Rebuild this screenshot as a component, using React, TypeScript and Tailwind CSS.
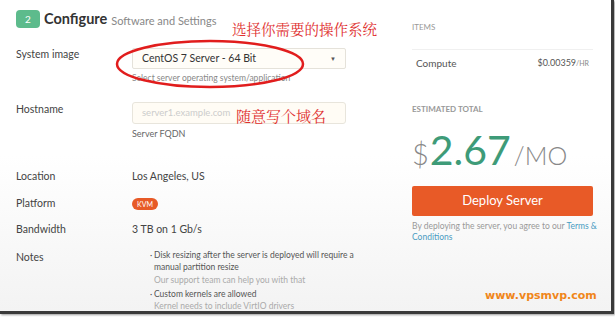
import React from "react";

const font = { fontFamily: '"Lato", "Noto Sans", sans-serif' };
const cjk = { fontFamily: '"Noto Serif CJK SC", "Noto Sans CJK SC", serif' };

export default function App() {
  return (
    <div className="w-[615px] h-[317px] bg-white overflow-hidden" style={font}>
      <div className="relative w-[614px] h-[314px] border-r-[3px] border-b-[3px] border-[#3a3a3a] bg-gradient-to-b from-white via-white to-[#f3f3f3] flex shadow-[1px_1px_2px_rgba(0,0,0,0.4)]">
        {/* Left column */}
        <div className="w-[346px] ml-4 pt-[10px] flex flex-col">
          <div className="flex items-center h-[18px]">
            <div className="w-[24px] h-[18px] rounded-[4px] bg-[#5dbb8c] text-white text-[10px] flex items-center justify-center">2</div>
            <span className="ml-[4px] text-[14.5px] font-bold text-[#333] leading-none">Configure</span>
            <span className="ml-[4px] text-[11px] text-[#888] leading-none mt-[3px]">Software and Settings</span>
          </div>

          <div className="flex mt-[20px]">
            <div className="w-[116px] text-[10.5px] text-[#444] leading-[14px] -mt-[1px]">System image</div>
            <div className="flex flex-col">
              <div className="w-[214px] h-[21px] border border-[#e5e2da] rounded-[2px] bg-[#fffdf8] flex items-center justify-between px-[9px]">
                <span className="text-[10.5px] text-[#333]">CentOS 7 Server - 64 Bit</span>
                <span className="text-[6px] text-[#555]">▼</span>
              </div>
              <div className="text-[8.5px] text-[#888] mt-[3px] leading-[12px]">Select server operating system/application</div>
            </div>
          </div>

          <div className="flex mt-[18px]">
            <div className="w-[116px] text-[10.5px] text-[#444] leading-[14px]">Hostname</div>
            <div className="flex flex-col">
              <div className="w-[214px] h-[22px] border border-[#e8e5dc] rounded-[3px] bg-[#fffcf5] flex items-center px-[9px]">
                <span className="text-[9.5px] text-[#ccc]">server1.example.com</span>
              </div>
              <div className="text-[9px] text-[#666] mt-[4px] leading-[12px]">Server FQDN</div>
            </div>
          </div>

          <div className="h-px bg-[#eee] w-[330px] mt-[22px]" />

          <div className="flex mt-[8px] items-center h-[14px]">
            <div className="w-[116px] text-[10.5px] text-[#444]">Location</div>
            <div className="text-[10.5px] text-[#444]">Los Angeles, US</div>
          </div>
          <div className="flex mt-[13px] items-center h-[14px]">
            <div className="w-[116px] text-[10.5px] text-[#444]">Platform</div>
            <div className="h-[12px] px-[5px] rounded-full bg-[#e75a27] text-white text-[7px] flex items-center">KVM</div>
          </div>
          <div className="flex mt-[12px] items-center h-[14px]">
            <div className="w-[116px] text-[10.5px] text-[#444]">Bandwidth</div>
            <div className="text-[10.5px] text-[#444]">3 TB on 1 Gb/s</div>
          </div>
          <div className="flex mt-[13px]">
            <div className="w-[134px] text-[10.5px] text-[#444] leading-[14px]">Notes</div>
            <div className="flex flex-col text-[8.5px] leading-[12.3px] -mt-[1px]">
              <div className="flex">
                <span className="text-[#555] w-[4px]">·</span>
                <div className="flex flex-col">
                  <span className="text-[#555] whitespace-nowrap">Disk resizing after the server is deployed will require a</span>
                  <span className="text-[#555]">manual partition resize</span>
                  <span className="text-[#aaa]">Our support team can help you with that</span>
                </div>
              </div>
              <div className="flex mt-[2px]">
                <span className="text-[#555] w-[4px]">·</span>
                <div className="flex flex-col">
                  <span className="text-[#555]">Custom kernels are allowed</span>
                  <span className="text-[#aaa]">Kernel needs to include VirtIO drivers</span>
                </div>
              </div>
            </div>
          </div>
        </div>

        {/* Right column */}
        <div className="ml-[50px] w-[181px] pt-[22px] flex flex-col">
          <div className="text-[8px] text-[#999] leading-[10px]">ITEMS</div>
          <div className="h-px bg-[#f0f0f0] mt-[17px]" />
          <div className="flex justify-between items-center mt-[7px] px-[4px] h-[12px]">
            <span className="text-[10px] text-[#555]">Compute</span>
            <span className="text-[9px] text-[#555]">$0.00359<span className="text-[7px] text-[#888]">/HR</span></span>
          </div>
          <div className="text-[8px] font-bold text-[#999] mt-[35px] leading-[10px]">ESTIMATED TOTAL</div>
          <div className="flex items-baseline mt-[15px] h-[36px] leading-none">
            <span className="text-[29px] text-[#888]" style={{ fontWeight: 300 }}>$</span>
            <span className="text-[41px] text-[#3e9b78] ml-[1px]">2.67</span>
            <span className="text-[25px] text-[#888] ml-[3px]" style={{ fontWeight: 300 }}>/MO</span>
          </div>
          <div className="mt-[21px] h-[30px] rounded-[2px] bg-[#e85a27] text-white text-[13px] flex items-center justify-center">Deploy Server</div>
          <div className="mt-[5px] w-[186px] text-[8.5px] leading-[11px] text-[#999]">
            By deploying the server, you agree to our <span className="text-[#4a9cc2]">Terms &amp; Conditions</span>
          </div>
          <div className="mt-[45px] ml-[73px] text-[11px] font-bold text-[#f0861a]" style={{ fontFamily: '"DejaVu Sans", sans-serif' }}>www.vpsmvp.com</div>
        </div>

        {/* Annotations overlay */}
        <div className="absolute left-[232px] top-[22px] text-[14.5px] text-[#e0302f] leading-none" style={cjk}>选择你需要的操作系统</div>
        <div className="absolute left-[236px] top-[108px] text-[15px] text-[#e0302f] leading-none" style={cjk}>随意写个域名</div>
        <svg className="absolute left-[114px] top-[38px]" width="192" height="52" viewBox="0 0 192 52">
          <ellipse cx="96" cy="26" rx="93" ry="23" fill="none" stroke="#e11d1d" strokeWidth="2.5" />
        </svg>
      </div>
    </div>
  );
}
